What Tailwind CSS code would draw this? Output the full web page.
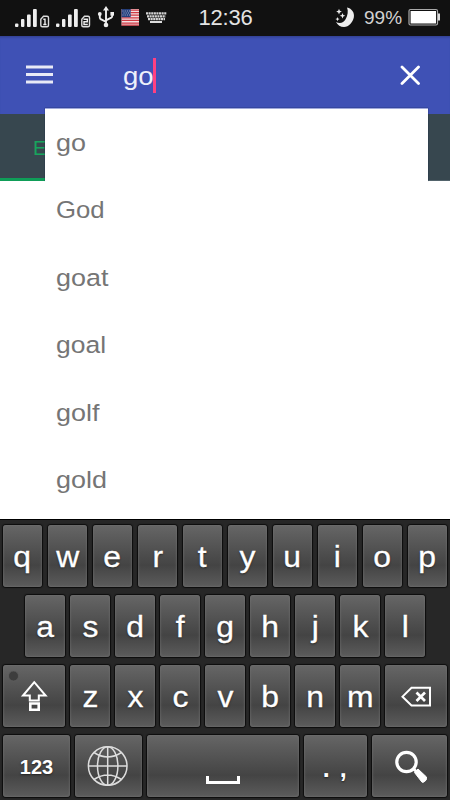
<!DOCTYPE html>
<html lang="en">
<head>
<meta charset="utf-8">
<title>Search</title>
<script src="https://cdn.jsdelivr.net/npm/@tailwindcss/browser@4"></script>
</head>
<body class="w-[450px] h-[800px] overflow-hidden bg-white font-['Liberation_Sans',Arial,sans-serif] flex flex-col">
<!-- Status bar -->
<header class="h-9 shrink-0 bg-[#111] text-[#e4e4e4] flex items-center">
  <svg class="w-[175px] h-9 shrink-0" viewBox="0 0 175 36" fill="none">
    <g fill="#eee">
      <rect x="15" y="23.5" width="3.4" height="3.5" rx="1"/><rect x="21" y="19" width="3.4" height="8" rx="1"/><rect x="27" y="14.5" width="3.7" height="12.5" rx="1"/><rect x="33" y="9" width="3.8" height="18" rx="1"/>
      <rect x="56" y="23.5" width="3.4" height="3.5" rx="1"/><rect x="62" y="19" width="3.4" height="8" rx="1"/><rect x="68" y="14.5" width="3.7" height="12.5" rx="1"/><rect x="74" y="9" width="3.8" height="18" rx="1"/>
    </g>
    <g stroke="#ddd" stroke-width="1.4"><path d="M43.500 16.300h3.500q1.500 0 1.500 1.500v7.400q0 1.500-1.500 1.500h-4.700q-1.500 0-1.500-1.500v-6z"/><path d="M84.500 16.300h3.500q1.500 0 1.500 1.500v7.400q0 1.500-1.500 1.500h-4.700q-1.500 0-1.500-1.500v-6z"/></g>
    <path d="M43.300 19.200h1.700v5M43.300 24.500h3.200M83.500 19.300h3.800v2.500h-3.300v2.700h3.800" stroke="#eee" stroke-width="1.400"/>
    <g stroke="#eee" stroke-width="1.900"><path d="M106 9v16M99.800 14.500v3q0 1.500 1.500 2l4.700 2.300M112.200 13.500v2.500q0 1.500-1.500 2l-4.700 2.300"/></g>
    <path d="M106 6l-3 4.500h6z" fill="#eee"/><circle cx="106" cy="25" r="2.300" fill="#eee"/><circle cx="99.800" cy="14" r="1.900" fill="#eee"/><rect x="110.400" y="12" width="3.600" height="3.600" fill="#eee"/>
    <rect x="121.500" y="9" width="17.500" height="16.500" fill="#f2dfe0"/>
    <path d="M121.500 10h17.500M121.500 12.600h17.500M121.500 15.200h17.500M121.500 17.800h17.500M121.500 20.400h17.500M121.500 23h17.500M121.500 25.200h17.500" stroke="#cf3943" stroke-width="1.250"/>
    <rect x="121.500" y="9" width="9.200" height="8.200" fill="#253f7c"/>
    <path d="M122.500 11h8M123.500 13h7M122.500 15h8" stroke="#b7c2dd" stroke-width=".9" stroke-dasharray="1 1.200"/>
    <path d="M146 13.300h20.500M147 16.300h18.500M148 19.200h17" stroke="#d5d5d5" stroke-width="2.300" stroke-dasharray="2.100 .5"/><path d="M150 22h12" stroke="#ddd" stroke-width="2"/>
  </svg>
  <span class="w-[100px] text-[22px] leading-9 text-center tracking-[-.2px] pl-px">12:36</span>
  <svg class="w-[55px] h-9 shrink-0 ml-auto" viewBox="325 0 55 36" fill="#eee"><path d="M347 7.500c5 1 7.800 5.500 6.800 10s-5 9.500-9.800 9.500c-3.500 0-6.500-2-8-5 4 2.200 7.500.9 9.700-3 2-3.500 2.800-8 1.300-11.500z"/><path d="M339 8.800l.8 2 2 .8-2 .8-.8 2-.8-2-2-.8 2-.8zM342.500 13l.8 2 2 .8-2 .8-.8 2-.8-2-2-.8 2-.8zM337.500 17l.6 1.500 1.500.6-1.500.6-.6 1.500-.6-1.500-1.500-.6 1.500-.6z"/></svg>
  <span class="w-[44px] -ml-[16px] text-[19px] leading-9 pb-px whitespace-nowrap text-[#d2d2d2]">99%</span>
  <svg class="w-[42px] h-9 shrink-0" viewBox="408 0 42 36"><rect x="409" y="9.500" width="28.500" height="15.500" rx="1.500" fill="none" stroke="#aaa" stroke-width="1.200"/><rect x="410.600" y="11" width="25.400" height="12.500" fill="#fff"/><rect x="438" y="13.500" width="2" height="7" fill="#ddd"/></svg>
</header>
<!-- Search bar -->
<div class="h-[78px] shrink-0 bg-[#3f51b5] flex items-center shadow-[inset_0_3px_3px_-2px_#2f3d88]">
  <svg class="w-[27px] h-5 ml-[26px]" viewBox="0 0 27 20" fill="#e8eaf6"><rect y=".5" width="27" height="3"/><rect y="8" width="27" height="3"/><rect y="15.500" width="27" height="3"/></svg>
  <div class="ml-[70px] flex items-center h-[35px]"><span class="w-[30px] text-[25px] leading-[35px] text-[#eef0fa] origin-left scale-x-[1.1] whitespace-nowrap pt-[3px]">go</span><span class="w-[3px] h-[35px] bg-[#ff4081]"></span></div>
  <svg class="w-5 h-5 ml-auto mr-[30px]" viewBox="0 0 20 20" fill="none" stroke="#fff" stroke-width="2.800" stroke-linecap="round"><path d="M2 2l16.500 16.500M18.500 2L2 18.500"/></svg>
</div>
<!-- Tab strip with the suggestion menu over it -->
<main class="relative flex-1 min-h-0">
  <div class="h-[67px] bg-[#37474f] flex border-b border-[#52636b]"><div class="w-[45px] h-[67px] border-b-[3px] border-[#0f9d58] pl-[33px] text-[#17a45d] text-[20px] leading-[69px] overflow-hidden">E</div></div>
  <div class="absolute left-[45px] -top-[6px] w-[383px] h-[73px] shadow-[0_0_1px_#111b3f]"></div>
  <ul class="absolute left-[45px] -top-[6px] w-[383px] h-[411px] bg-white text-[#757575] text-[24.5px] border-t border-[#9fa8da] pl-[11px]">
    <li class="h-[67.4px] leading-[68px] origin-left scale-x-[1.1]">go</li>
    <li class="h-[67.4px] leading-[68px] origin-left scale-x-[1.05]">God</li>
    <li class="h-[67.4px] leading-[68px] origin-left scale-x-[1.1]">goat</li>
    <li class="h-[67.4px] leading-[68px] origin-left scale-x-[1.08]">goal</li>
    <li class="h-[67.4px] leading-[68px] origin-left scale-x-[1.1]">golf</li>
    <li class="h-[67.4px] leading-[68px] origin-left scale-x-[1.1]">gold</li>
  </ul>
</main>
<!-- Keyboard -->
<section id="kb" class="relative h-[281px] shrink-0 bg-[#272727] border-t border-black pt-[5px] flex flex-col gap-2"></section>
<script>
const base = "h-[62px] shrink-0 rounded-[3px] flex items-center justify-center text-white bg-linear-to-b from-[#666] via-[#444] via-65% to-[#5c5c5c] shadow-[inset_0_0_2px_1px_#70707088,0_0_1px_1px_#0d0d0d] ";
const key = (w, c) => `<div class="${base}${w}">${c}</div>`;
const letter = (w, c) => key(w, `<span class="text-[29.5px] leading-[62px] pt-px h-[62px] scale-x-[1.08] [-webkit-text-stroke:.3px_white] [text-shadow:0_1px_2px_#222]">${c}</span>`);
const letters = (w, s) => [...s].map(c => letter(w, c)).join("");
const icon = (vb, c) => `<svg class="w-full h-full" viewBox="${vb}" fill="none" stroke="#fff">${c}</svg>`;
const shift = icon("0 0 62 62", `<circle cx="10.500" cy="11" r="5" fill="#3d3d3d" stroke="#606060" stroke-width=".7"/><path d="M31.300 17.200L20 30.500h6.800v5h9v-5H42.600z" stroke-width="2"/><path d="M27.300 38.500h8.400v6.200h-8.400z" stroke-width="2.600"/>`);
const del = icon("0 0 62 62", `<path d="M26.500 22.800h18.500v17.700h-18.500l-9-8.850z" stroke-width="2"/><path d="M31.500 27.500l8.500 8.500M40 27.500l-8.500 8.500" stroke-width="2.700"/>`);
const globe = icon("0 0 67 62", `<g stroke="#ddd" stroke-width="1.500"><circle cx="32.700" cy="31" r="19.300"/><ellipse cx="32.700" cy="31" rx="10.200" ry="19.300"/><path d="M32.700 11.500v39M13.400 31h38.600M19 17.500q13.700 9 27.400 0M19 44.500q13.700-9 27.400 0"/></g>`);
const space = icon("0 0 152 62", `<path d="M60.500 41v6.500h31v-6.500" stroke-width="3"/>`);
const find = icon("0 0 75 62", `<circle cx="34.500" cy="27" r="9.700" stroke-width="3.200"/><path d="M41 33.500l4 3.700" stroke-width="3"/><path d="M42.500 37.500l3.500-3.500 8.500 8q.8 3.500-3 5.200h-1.500z" fill="#fff" stroke="#fff" stroke-width="1" stroke-linejoin="round"/>`);
document.getElementById("kb").innerHTML =
  `<div class="flex gap-[6px] pl-[3px]">${letters("w-[39px]", "qwertyuiop")}</div>` +
  `<div class="flex gap-[5px] pl-[25px]">${letters("w-[40px]", "asdfghjkl")}</div>` +
  `<div class="flex gap-[5px] pl-[3px]">${key("w-[62px]", shift)}${letters("w-[40px]", "zxcvbnm")}${key("w-[62px]", del)}</div>` +
  `<div class="flex gap-[5px] pl-[3px]">${key("w-[67px]", '<span class="text-[20px] font-bold [text-shadow:0_1px_2px_#222] pt-px">123</span>')}${key("w-[67px]", globe)}${key("w-[152px]", space)}${key("w-[63px]", '<span class="text-[25px] font-bold pt-[6px] whitespace-pre tracking-[1.5px] [text-shadow:0_1px_2px_#222]">. ,</span>')}${key("w-[75px]", find)}</div>`;
</script>
</body>
</html>
